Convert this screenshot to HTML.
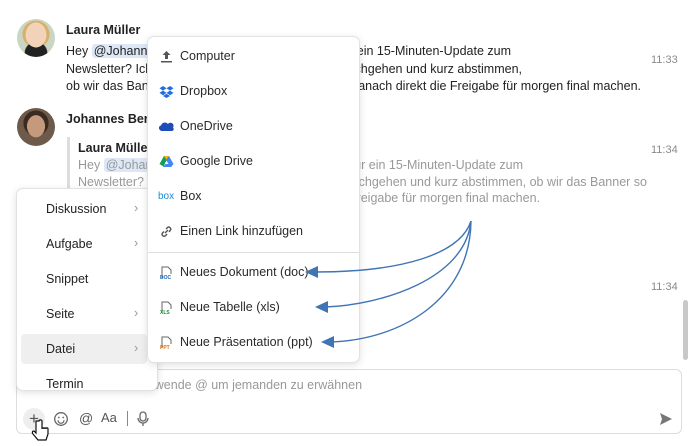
<!DOCTYPE html>
<html><head><meta charset="utf-8"><style>
*{box-sizing:border-box;margin:0;padding:0}
body{width:700px;height:446px;overflow:hidden;background:#fff;font-family:"Liberation Sans",sans-serif;color:#222;position:relative;font-size:12.5px}
.a{position:absolute;white-space:nowrap}
.r{position:absolute;white-space:nowrap;text-align:right}
.b{font-weight:bold;font-size:12.5px}
.t{color:#8a8a8a;font-size:11px}
.g{color:#999}
.m{background:#dde8f7;border-radius:3px;padding:0 2px}
.menu{position:absolute;background:#fff;border:1px solid #e2e2e2;border-radius:7px;box-shadow:0 2px 8px rgba(0,0,0,.12)}
.it{position:absolute;left:0;right:0;height:35px;line-height:35px;font-size:12.5px;color:#2a2a2a}
.ic{position:absolute;left:11px;top:10px;width:15px;height:15px}
</style></head><body>
<div class="a" style="left:17px;top:19px;width:38px;height:38px;border-radius:50%;background:radial-gradient(ellipse 30% 36% at 50% 42%,#f2d2b8 0 90%,transparent 92%),radial-gradient(circle at 50% 90%,#222 0 28%,transparent 30%),radial-gradient(circle at 50% 40%,#d9b06a 0 45%,#c9d6c2 46%)"></div>
<div class="a" style="left:17px;top:108px;width:38px;height:38px;border-radius:50%;background:radial-gradient(ellipse 26% 32% at 50% 48%,#c59a7c 0 90%,transparent 92%),radial-gradient(circle at 50% 40%,#3b2a22 0 42%,#6e5a4a 43%)"></div>
<div class="a b" style="left:66px;top:23px">Laura Müller</div>
<div class="a" style="left:66px;top:44px">Hey <span class="m">@Johannes Berger</span></div>
<div class="r" style="right:189px;top:44px">r ein 15-Minuten-Update zum</div>
<div class="a" style="left:66px;top:62px">Newsletter? Ich würde</div>
<div class="r" style="right:178px;top:62px">rchgehen und kurz abstimmen,</div>
<div class="a" style="left:66px;top:79px">ob wir das Banner so lassen</div>
<div class="r" style="right:59px;top:79px">r danach direkt die Freigabe für morgen final machen.</div>
<div class="a t" style="left:651px;top:54px">11:33</div>
<div class="a b" style="left:66px;top:112px">Johannes Berger</div>
<div class="a t" style="left:651px;top:144px">11:34</div>
<div class="a" style="left:67px;top:137px;width:3px;height:90px;background:#ddd"></div>
<div class="a b" style="left:78px;top:141px">Laura Müller</div>
<div class="a g" style="left:78px;top:158px">Hey <span class="m">@Johannes</span> Berger</div>
<div class="r g" style="right:177px;top:158px">für ein 15-Minuten-Update zum</div>
<div class="a g" style="left:78px;top:175px">Newsletter? Ich würde</div>
<div class="r g" style="right:53px;top:175px">lurchgehen und kurz abstimmen, ob wir das Banner so</div>
<div class="a g" style="left:78px;top:191px">lassen? Dann können</div>
<div class="r g" style="right:160px;top:191px">Freigabe für morgen final machen.</div>
<div class="a t" style="left:651px;top:281px">11:34</div>
<div class="a" style="left:683px;top:300px;width:5px;height:60px;border-radius:3px;background:#c8c8c8"></div>
<div class="a" style="left:16px;top:369px;width:666px;height:65px;border:1px solid #ddd;border-radius:6px"></div>
<div class="a g" style="left:136px;top:378px">Verwende @ um jemanden zu erwähnen</div>
<div class="a" style="left:23px;top:408px;width:22px;height:22px;border-radius:50%;background:#eee;text-align:center;line-height:21px;font-size:17px;color:#555">+</div>
<svg class="a" style="left:53px;top:411px" width="16" height="16"><circle cx="8" cy="8" r="6.3" fill="none" stroke="#666" stroke-width="1.3"/><circle cx="5.8" cy="6.5" r="0.9" fill="#666"/><circle cx="10.2" cy="6.5" r="0.9" fill="#666"/><path d="M5 9.3a3 3 0 0 0 6 0" fill="none" stroke="#666" stroke-width="1.2"/></svg>
<div class="a" style="left:79px;top:410px;font-size:14px;color:#555">@</div>
<div class="a" style="left:101px;top:410px;font-size:13px;color:#555">Aa</div>
<div class="a" style="left:127px;top:411px;width:1px;height:15px;background:#888"></div>
<svg class="a" style="left:136px;top:411px" width="14" height="16"><rect x="4" y="1" width="6" height="9" rx="3" fill="none" stroke="#666" stroke-width="1.3"/><path d="M2 7a5 5 0 0 0 10 0M7 12v3" fill="none" stroke="#666" stroke-width="1.3"/></svg>
<svg class="a" style="left:659px;top:412px" width="14" height="14"><path d="M1 1L13 7L1 13L3 7Z" fill="#777"/></svg>
<svg class="a" style="left:31px;top:419px" width="20" height="24"><path d="M5 2v12l-2-2c-2 0-2 2-1 3l5 6h8l2-6v-5c0-1.5-2-1.5-2 0 0-1.5-2-1.5-2 0 0-1.5-2-1.5-2 0V2c0-1.5-3-1.5-3 0z" fill="#fff" stroke="#111" stroke-width="1.2"/></svg>

<div class="menu" style="left:16px;top:188px;width:142px;height:203px">
 <div class="a" style="left:4px;top:145px;width:126px;height:30px;background:#efefef;border-radius:4px"></div>
 <div class="a" style="left:29px;top:13px">Diskussion</div><div class="a g" style="left:117px;top:12px">›</div>
 <div class="a" style="left:29px;top:48px">Aufgabe</div><div class="a g" style="left:117px;top:47px">›</div>
 <div class="a" style="left:29px;top:83px">Snippet</div>
 <div class="a" style="left:29px;top:118px">Seite</div><div class="a g" style="left:117px;top:117px">›</div>
 <div class="a" style="left:29px;top:153px">Datei</div><div class="a g" style="left:117px;top:152px">›</div>
 <div class="a" style="left:29px;top:188px">Termin</div>
</div>

<div class="menu" style="left:147px;top:36px;width:213px;height:327px">
 <div class="it" style="top:2px"><svg class="ic" viewBox="0 0 15 15"><path d="M7.5 2L3.5 6h2.5v4h3V6h2.5zM2 12h11v1.5H2z" fill="#555"/></svg><span style="margin-left:32px">Computer</span></div>
 <div class="it" style="top:37px"><svg class="ic" viewBox="0 0 15 15"><path d="M4 2l3.5 2.3L4 6.6 0.5 4.3zM11 2l3.5 2.3L11 6.6 7.5 4.3zM4 6.6l3.5 2.3L4 11.2 0.5 8.9zM11 6.6l3.5 2.3L11 11.2 7.5 8.9zM4 12l3.5-2.2L11 12 7.5 14z" fill="#1f6fe0"/></svg><span style="margin-left:32px">Dropbox</span></div>
 <div class="it" style="top:72px"><svg class="ic" viewBox="0 0 15 15"><path d="M1 11a2.5 2.5 0 0 1 1-4.5A4 4 0 0 1 9 5a3 3 0 0 1 5 3.5A2 2 0 0 1 13 12H2z" fill="#1d4db8"/></svg><span style="margin-left:32px">OneDrive</span></div>
 <div class="it" style="top:107px"><svg class="ic" viewBox="0 0 15 15"><path d="M5 2h5l-3.2 5.5-2.5-4.3z" fill="#f4b400"/><path d="M10 2l4.5 8H9.5L7 5.7z" fill="#4285f4"/><path d="M0.5 10L5 2l2.5 4.3L4.5 12.5z" fill="#0f9d58"/><path d="M4 13l2.5-3h8L12 13z" fill="#4285f4"/></svg><span style="margin-left:32px">Google Drive</span></div>
 <div class="it" style="top:142px"><span class="a" style="left:10px;top:0;font-size:10px;color:#1b8ad6">box</span><span style="margin-left:32px">Box</span></div>
 <div class="it" style="top:177px"><svg class="ic" viewBox="0 0 15 15"><path d="M6 9l3-3M5 7.5L3.5 9a2 2 0 0 0 2.8 2.8L8 10M7 5l1.5-1.5a2 2 0 0 1 2.8 2.8L10 8" fill="none" stroke="#555" stroke-width="1.4"/></svg><span style="margin-left:32px">Einen Link hinzufügen</span></div>
 <div class="a" style="left:0;right:0;top:215px;height:1px;background:#ddd"></div>
 <div class="it" style="top:218px"><svg class="ic" viewBox="0 0 15 15"><path d="M3 13V2h6l3 3v4" fill="none" stroke="#666" stroke-width="1"/><text x="1" y="14" font-size="5" fill="#1d63c0" font-family="Liberation Sans" font-weight="bold">DOC</text></svg><span style="margin-left:32px">Neues Dokument (doc)</span></div>
 <div class="it" style="top:253px"><svg class="ic" viewBox="0 0 15 15"><path d="M3 13V2h6l3 3v4" fill="none" stroke="#666" stroke-width="1"/><text x="1" y="14" font-size="5" fill="#1e8e3e" font-family="Liberation Sans" font-weight="bold">XLS</text></svg><span style="margin-left:32px">Neue Tabelle (xls)</span></div>
 <div class="it" style="top:288px"><svg class="ic" viewBox="0 0 15 15"><path d="M3 13V2h6l3 3v4" fill="none" stroke="#666" stroke-width="1"/><text x="1" y="14" font-size="5" fill="#e8710a" font-family="Liberation Sans" font-weight="bold">PPT</text></svg><span style="margin-left:32px">Neue Präsentation (ppt)</span></div>
</div>

<svg class="a" style="left:0;top:0" width="700" height="446">
<g fill="none" stroke="#3f74b5" stroke-width="1.4">
<path d="M471 221C460 255 400 272 315 272"/>
<path d="M471 221C465 280 380 305 325 307"/>
<path d="M471 221C470 300 400 340 330 342"/>
</g>
<g fill="#3f74b5">
<path d="M305 272l13-6v12z"/><path d="M315 307l13-6v12z"/><path d="M321 342l13-6v12z"/>
</g>
</svg>
</body></html>
